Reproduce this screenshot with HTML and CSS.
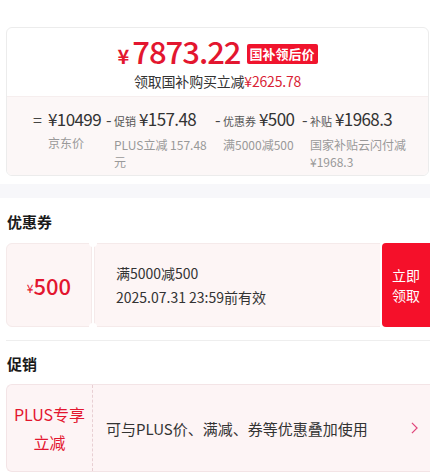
FILE: index.html
```html
<!DOCTYPE html>
<html>
<head>
  <meta charset="UTF-8">
  <title>价格详情</title>
  <link rel="stylesheet" href="styles.css">
</head>
<body>
  <div class="price-card">
    <div class="price-main">
      <div class="price-line">
        <span class="price-big"><span class="yen">¥</span>7873.22</span>
        <span class="price-badge">国补领后价</span>
      </div>
      <div class="price-sub">领取国补购买立减<span class="red">¥2625.78</span></div>
    </div>

    <!-- price breakdown -->
    <div class="breakdown">
      <span class="op op-eq">=</span>
      <div class="item item-1">
        <div class="item-val">¥10499</div>
        <div class="item-desc">京东价</div>
      </div>
      <span class="op">-</span>
      <div class="item item-2">
        <div class="item-val"><small>促销</small>¥157.48</div>
        <div class="item-desc">PLUS立减 157.48元</div>
      </div>
      <span class="op">-</span>
      <div class="item item-3">
        <div class="item-val"><small>优惠券</small>¥500</div>
        <div class="item-desc">满5000减500</div>
      </div>
      <span class="op">-</span>
      <div class="item item-4">
        <div class="item-val"><small>补贴</small>¥1968.3</div>
        <div class="item-desc">国家补贴云闪付减¥1968.3</div>
      </div>
    </div>
  </div>

  <div class="band"></div>

  <div class="section">
    <h2 class="section-title">优惠券</h2>
    <div class="coupon">
      <div class="coupon-amount"><small>¥</small>500</div>
      <div class="coupon-info">
        <div>满5000减500</div>
        <div>2025.07.31 23:59前有效</div>
      </div>
      <button class="coupon-btn">立即<br>领取</button>
      <span class="notch notch-top"></span>
      <span class="notch notch-bottom"></span>
    </div>
  </div>

  <div class="section section-line">
    <h2 class="section-title">促销</h2>
    <div class="promo">
      <div class="promo-tag">PLUS专享<br>立减</div>
      <div class="promo-text">可与PLUS价、满减、券等优惠叠加使用</div>
      <svg class="promo-arrow" viewBox="0 0 8 14" width="7" height="12">
        <path d="M1 1l6 6-6 6" fill="none" stroke="#e0457a" stroke-width="1.4"/>
      </svg>
    </div>
  </div>
</body>
</html>
```

FILE: styles.css
```css
body {
  margin: 0;
  background: #fff;
  color: #333;
  font-family: "Noto Sans CJK SC", "Noto Sans", sans-serif;
}

.red {
  color: #d91f36;
}

.price-card {
  margin: 27px 1px 0 6px;
  border: 1px solid #ececec;
  border-radius: 6px;
  overflow: hidden;
}

.price-main {
  padding: 8px 0 6px;
  text-align: center;
}

.price-line {
  display: flex;
  justify-content: center;
  align-items: center;
  gap: 6px;
  height: 34px;
}

.price-big {
  color: #e3162f;
  font-size: 31px;
  font-weight: 500;
  line-height: 34px;
  letter-spacing: -1px;
}

.price-big .yen {
  font-size: 20px;
  font-weight: 700;
  margin-right: 4px;
}

.price-badge {
  background: #f0142d;
  color: #fff;
  font-size: 13px;
  font-weight: 700;
  line-height: 20px;
  padding: 0 3px;
  border-radius: 2px;
  margin-top: 2px;
}

.price-sub {
  font-size: 14px;
  line-height: 18px;
  margin-top: 2px;
  color: #333;
  letter-spacing: -0.2px;
}

.breakdown {
  display: flex;
  align-items: flex-start;
  background: #fcf7f7;
  padding: 10px 0 5px 26px;
  border-top: 1px solid #f6eeee;
}

.op {
  font-size: 16px;
  line-height: 24px;
  color: #444;
  width: 8px;
  flex: none;
}

.op-eq {
  width: 15px;
}

.item {
  flex: none;
}

.item-1 { width: 58px; }
.item-2 { width: 101px; }
.item-3 { width: 79px; }
.item-4 { width: 100px; }

.item-val {
  font-size: 17px;
  line-height: 24px;
  color: #333;
  white-space: nowrap;
  letter-spacing: -0.6px;
}

.item-val small {
  font-size: 11px;
  color: #555;
  letter-spacing: 0;
  margin-right: 3px;
}

.item-desc {
  font-size: 12px;
  line-height: 17px;
  color: #999;
  margin-top: 3px;
}

.band {
  height: 14px;
  margin-top: 8px;
  background: #f7f7fa;
}

.section {
  padding: 0 0 0 6px;
}

.section-title {
  margin: 0;
  padding: 13px 0 10px 1px;
  font-size: 15px;
  line-height: 22px;
  font-weight: 700;
  color: #1a1a1a;
}

.coupon {
  position: relative;
  display: flex;
  height: 84px;
  gap: 2px;
}

.coupon-amount {
  width: 86px;
  background: #fdf5f5;
  border: 1px solid #f5eaea;
  border-radius: 6px 0 0 6px;
  box-sizing: border-box;
  display: flex;
  align-items: center;
  justify-content: center;
  color: #e3162f;
  font-size: 22px;
  font-weight: 500;
}

.coupon-amount small {
  font-size: 12px;
  font-weight: 400;
  margin-top: 4px;
}

.coupon-info {
  flex: 1;
  background: #fdf5f5;
  border: 1px solid #f5eaea;
  border-right: none;
  padding: 0 0 0 21px;
  display: flex;
  flex-direction: column;
  justify-content: center;
  gap: 4px;
  font-size: 14px;
  line-height: 20px;
  color: #333;
}

.coupon-btn {
  width: 48px;
  border: none;
  background: #f5102a;
  color: #fff;
  font-family: inherit;
  font-size: 14px;
  line-height: 20px;
  padding: 0;
  border-radius: 4px 0 0 4px;
}

/* ticket cut-outs between amount and info */
.notch {
  position: absolute;
  left: 83px;
  width: 8px;
  height: 8px;
  border-radius: 50%;
  background: #fff;
}

.notch-top {
  top: -4px;
}

.notch-bottom {
  bottom: -4px;
}

.section-line {
  margin-top: 13px;
}

.section-line .section-title {
  border-top: 1px solid #eee;
  padding-top: 12px;
  padding-bottom: 9px;
}

.promo {
  display: flex;
  align-items: center;
  height: 88px;
  background: #fdf4f5;
  border: 1px solid #f3e4e6;
  border-right: none;
  border-radius: 6px 0 0 6px;
  box-sizing: border-box;
}

.promo-tag {
  width: 86px;
  height: 100%;
  box-sizing: border-box;
  border-right: 1px dashed #e8cfd3;
  display: flex;
  align-items: center;
  justify-content: center;
  text-align: center;
  color: #e3162f;
  font-size: 16px;
  line-height: 28px;
}

.promo-text {
  flex: 1;
  padding-left: 13px;
  font-size: 15px;
  color: #333;
}

.promo-arrow {
  margin-right: 12px;
}
```
